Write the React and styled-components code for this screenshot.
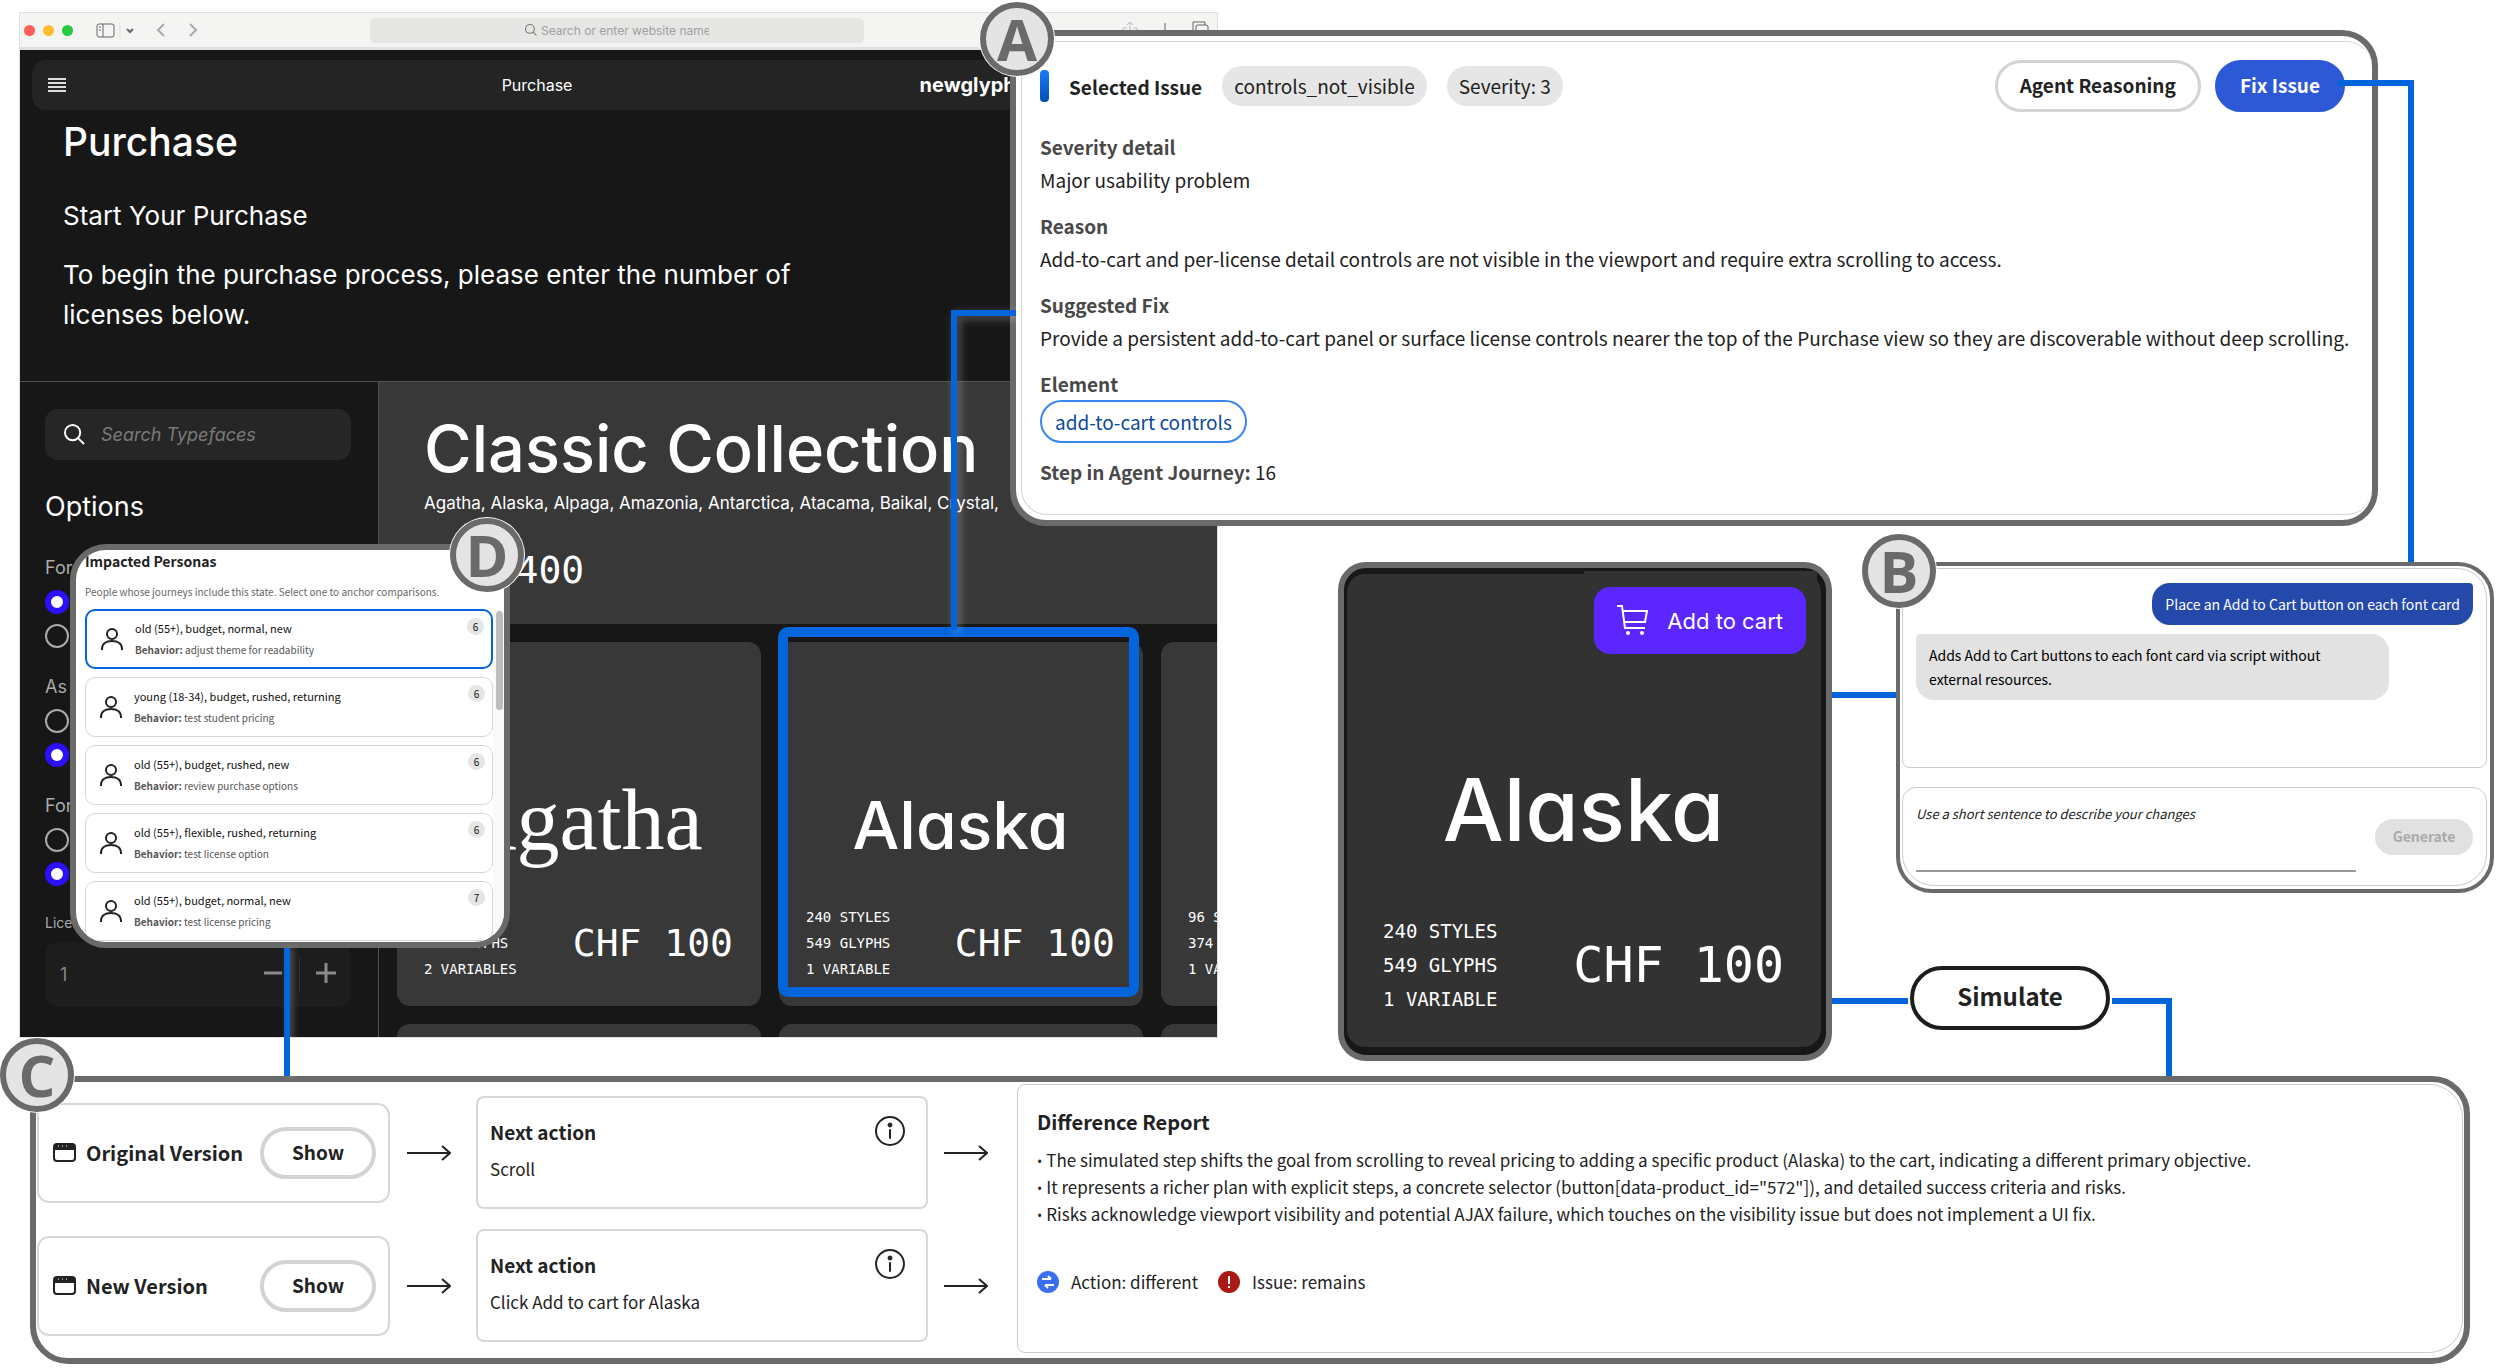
import styled, { createGlobalStyle, css } from "styled-components";

const blue = "#0265dc";
const frame = "#6a6a6a";
const site = `Inter, "Liberation Sans", sans-serif`;
const tool = `"Noto Sans CJK SC", "Noto Sans", sans-serif`;
const mono = `"DejaVu Sans Mono", "Liberation Mono", monospace`;

const GlobalStyle = createGlobalStyle`
  * {
    box-sizing: border-box;
  }

  body {
    margin: 0;
    background: #fff;
  }

  h1, h2, h3, p, ul, fieldset {
    margin: 0;
    padding: 0;
    border: 0;
    font-weight: 400;
  }

  button, input, textarea {
    font-family: inherit;
    margin: 0;
  }
`;

const Canvas = styled.main`
  position: relative;
  padding: 12px 0 8px;
  font-family: ${tool};
  color: #222;
`;

const TopRow = styled.div`
  display: grid;
  grid-template-columns: 1199fr 1294fr;
  align-items: start;
  padding-left: 19px;
`;

/* markers and connectors */

const Marker = styled.span`
  position: absolute;
  z-index: 3;
  left: ${({ $left }) => $left}px;
  top: ${({ $top }) => $top}px;
  width: 74px;
  height: 74px;
  display: flex;
  align-items: center;
  justify-content: center;
  border: 6px solid ${frame};
  border-radius: 50%;
  background: #e4e4e4;
  box-shadow: 0 0 0 1px #fff;
  color: ${frame};
  font-family: "Open Sans", "Noto Sans", sans-serif;
  font-weight: 700;
  font-size: 58px;
  line-height: 62px;
`;

const Link = styled.div`
  flex: none;
  width: ${({ $width }) => $width}px;
  height: 6px;
  margin-top: ${({ $drop }) => $drop}px;
  background: ${blue};
`;

const SelectionElbow = styled.div`
  position: absolute;
  right: 100%;
  top: 274px;
  width: 65px;
  height: 320px;
  border: solid ${blue};
  border-width: 6px 0 0 6px;
  filter: drop-shadow(3px 3px 4px rgba(255, 255, 255, 0.3));
`;

const FixElbow = styled.div`
  position: absolute;
  left: calc(100% - 34px);
  top: 44px;
  width: 76px;
  height: 482px;
  border: solid ${blue};
  border-width: 6px 6px 0 0;
`;

const SimulateElbow = styled.div`
  width: 60px;
  height: 78px;
  margin-top: 32px;
  border: solid ${blue};
  border-width: 6px 6px 0 0;
`;

const PersonaLink = styled.div`
  position: absolute;
  left: 208px;
  top: 398px;
  width: 6px;
  height: 128px;
  background: ${blue};
  box-shadow: 3px 0 6px rgba(255, 255, 255, 0.25);
`;

/* browser window */

const BrowserArea = styled.div`
  position: relative;
  min-width: 0;
`;

const Browser = styled.section`
  height: 1026px;
  display: flex;
  flex-direction: column;
  overflow: hidden;
  border: 1px solid #e0e0e0;
  background: #171717;
  color: #fff;
  font-family: ${site};
`;

const BrowserBar = styled.header`
  flex: none;
  height: 37px;
  display: grid;
  grid-template-columns: 350fr 493fr 353fr;
  align-items: center;
  border-bottom: 3px solid #e0e0e0;
  background: #f4f4f2;
  color: #777;
`;

const BarGroup = styled.div`
  display: flex;
  align-items: center;
  gap: 8px;
  padding-left: 4px;
`;

const BarActions = styled(BarGroup)`
  justify-content: flex-end;
  gap: 19px;
  padding-right: 8px;
`;

const Light = styled.span`
  width: 11px;
  height: 11px;
  border-radius: 50%;
  background: ${({ $color }) => $color};
`;

const Address = styled.label`
  height: 25px;
  display: flex;
  align-items: center;
  justify-content: center;
  gap: 4px;
  border-radius: 5px;
  background: #e6e6e5;

  input {
    width: 168px;
    padding: 0;
    border: 0;
    background: none;
    font-size: 12px;
  }

  input::placeholder {
    color: #a0a0a0;
  }
`;

const SiteNav = styled.nav`
  flex: none;
  height: 50px;
  display: grid;
  grid-template-columns: 458fr 422fr 272fr;
  align-items: center;
  margin: 10px 12px 0;
  padding: 0 16px;
  border-radius: 14px;
  background: #242424;
  font-size: 16px;
`;

const MenuButton = styled.button`
  width: 18px;
  height: 15px;
  padding: 0;
  border: 0;
  background: repeating-linear-gradient(#ddd 0 2px, transparent 2px 4px);
`;

const Brand = styled.a`
  color: #fff;
  font-weight: 700;
  font-size: 20px;
  text-decoration: none;
`;

const Hero = styled.div`
  flex: none;
  padding: 8px 43px 46px;
  border-bottom: 1px solid #505050;

  h1 {
    font-size: 39px;
    font-weight: 500;
    line-height: 48px;
  }

  h2 {
    margin-top: 34px;
    font-size: 26px;
    line-height: 32px;
  }

  p {
    max-width: 760px;
    margin-top: 23px;
    font-size: 26px;
    line-height: 40px;
  }
`;

const Shop = styled.div`
  flex: 1;
  min-height: 0;
  display: grid;
  grid-template-columns: 359px 1fr;
`;

const Sidebar = styled.aside`
  padding: 27px 27px 0 25px;
  border-right: 1px solid #505050;
`;

const SearchBox = styled.label`
  height: 51px;
  display: flex;
  align-items: center;
  gap: 16px;
  padding-left: 19px;
  border-radius: 13px;
  background: #262626;

  input {
    width: 200px;
    padding: 0;
    border: 0;
    background: none;
    font-size: 18px;
    font-style: italic;
  }

  input::placeholder {
    color: #7a7a7a;
  }
`;

const OptionsTitle = styled.h2`
  margin-top: 31px;
  margin-bottom: 33px;
  font-size: 27px;
  line-height: 32px;
`;

const OptionGroup = styled.fieldset`
  display: flex;
  flex-direction: column;
  gap: 10px;
  margin-bottom: 27px;

  legend {
    height: 34px;
    padding: 0;
    color: #aaa;
    font-size: 18px;
    line-height: 24px;
  }
`;

const Radio = styled.input`
  appearance: none;
  width: 24px;
  height: 24px;
  border: 2px solid #aaa;
  border-radius: 50%;

  &:checked {
    border: 6px solid #2b0fff;
    background: #fff;
  }
`;

const LicenseLabel = styled.label`
  display: block;
  color: #aaa;
  font-size: 14px;
  line-height: 20px;
`;

const Stepper = styled.div`
  height: 65px;
  display: flex;
  align-items: center;
  margin-top: 9px;
  padding-left: 15px;
  border-radius: 13px;
  background: #1d1d1d;

  input {
    flex: 1;
    min-width: 0;
    padding: 0;
    border: 0;
    background: none;
    color: #888;
    font-size: 18px;
  }

  button {
    width: 52px;
    height: 34px;
    padding: 0;
    border: 0;
    background: none;
    color: #8a8a8a;
  }

  button + button {
    border-left: 1px solid #333;
  }
`;

const Catalog = styled.div`
  min-width: 0;
  overflow: hidden;
`;

const CollectionHead = styled.header`
  padding: 31px 45px 32px;
  background: #383838;
  white-space: nowrap;

  h2 {
    font-size: 65px;
    font-weight: 500;
    line-height: 72px;
  }

  p {
    margin-top: 6px;
    font-size: 17px;
    line-height: 24px;
  }
`;

const CollectionPrice = styled.strong`
  display: block;
  margin-top: 33px;
  font-family: ${mono};
  font-weight: 400;
  font-size: 38px;
  line-height: 44px;
`;

const CardGrid = styled.div`
  display: grid;
  grid-template-columns: repeat(3, 364px);
  gap: 18px;
  padding: 18px;
`;

const FontCard = styled.article`
  position: relative;
  height: 364px;
  display: flex;
  flex-direction: column;
  justify-content: flex-end;
  padding: 0 28px 24px 27px;
  border-radius: 13px;
  background: #383838;

  ${({ $selected }) =>
    $selected &&
    css`
      &::after {
        content: "";
        position: absolute;
        inset: -15px 4px 9px -1px;
        border: 10px solid ${blue};
        border-radius: 10px;
      }
    `}
`;

const Specimen = styled.h3`
  margin-bottom: 39px;
  text-align: center;
  font-family: ${({ $serif }) => ($serif ? `"Liberation Serif", serif` : site)};
  font-feature-settings: "cv11";
  font-weight: ${({ $serif }) => ($serif ? 400 : 500)};
  font-size: ${({ $serif }) => ($serif ? 86 : 66)}px;
  line-height: ${({ $serif }) => ($serif ? 90 : 80)}px;
`;

const CardFoot = styled.div`
  display: flex;
  align-items: center;
  justify-content: space-between;
  font-family: ${mono};
`;

const Stats = styled.ul`
  list-style: none;
  font-size: 14px;
  line-height: 26px;
`;

const Price = styled.span`
  font-size: 38px;
  line-height: 44px;
`;

/* previewed card, chat and simulation */

const Workbench = styled.div`
  display: grid;
  grid-template-columns: 494fr 662fr;
  align-items: start;
  padding: 550px 18px 0 120px;
`;

const Preview = styled.article`
  padding: 6px 5px 8px 3px;
  border: 6px solid ${frame};
  border-radius: 28px;
  background: #171717;
  color: #fff;
  font-family: ${site};
`;

const PreviewBody = styled.div`
  position: relative;
  display: flex;
  flex-direction: column;
  padding: 13px 37px 31px 36px;
  border-radius: 18px;
  background: #323232;

  /* injected toolbar area that sits above the card edge */
  &::before {
    content: "";
    position: absolute;
    top: -3px;
    right: 4px;
    width: 233px;
    height: 24px;
    background: #323232;
  }
`;

const CartButton = styled.button`
  position: relative;
  align-self: flex-end;
  height: 67px;
  display: flex;
  align-items: center;
  gap: 19px;
  margin-right: -22px;
  padding: 0 23px;
  border: 0;
  border-radius: 16px;
  background: #5b26ff;
  color: #fff;
  font-size: 22px;
`;

const PreviewName = styled(Specimen)`
  margin: 104px 0 52px;
  font-size: 86px;
  line-height: 104px;
`;

const PreviewStats = styled(Stats)`
  font-size: 19px;
  line-height: 34px;
`;

const PreviewPrice = styled(Price)`
  font-size: 50px;
  line-height: 58px;
`;

const Side = styled.div`
  display: flex;
  flex-direction: column;
  gap: 73px;
`;

const SideRow = styled.div`
  display: flex;
  align-items: flex-start;
  gap: ${({ $gap }) => $gap || 0}px;
`;

const Chat = styled.section`
  position: relative;
  flex: 1;
  padding: 2px 3px 3px 2px;
  border: 4px solid ${frame};
  border-radius: 36px;
  background: #fff;
  font-size: 14px;
`;

const Messages = styled.div`
  height: 200px;
  display: flex;
  flex-direction: column;
  align-items: flex-start;
  gap: 9px;
  padding: 14px 13px;
  border: 1px solid #ccc;
  border-radius: 30px 30px 8px 8px;
  line-height: 24px;
`;

const Bubble = styled.p`
  max-width: 473px;
  padding: 9px 40px 9px 13px;
  border-radius: 4px 18px 18px 18px;
  background: #e2e2e2;
  color: #000;

  ${({ $own }) =>
    $own &&
    css`
      align-self: flex-end;
      padding: 9px 13px;
      border-radius: 18px 4px 18px 18px;
      background: #2549ab;
      color: #fff;
    `}
`;

const Composer = styled.form`
  display: flex;
  align-items: center;
  gap: 19px;
  margin-top: 19px;
  padding: 13px;
  border: 1px solid #ccc;
  border-radius: 14px 14px 32px 32px;

  textarea {
    flex: 1;
    height: 71px;
    padding: 0;
    border: 0;
    border-bottom: 2px solid #999;
    background: none;
    font-size: 13px;
    font-style: italic;
    line-height: 26px;
    resize: none;
  }

  textarea::placeholder {
    color: #222;
  }

  button {
    width: 98px;
    height: 36px;
    padding: 0 0 2px;
    border: 0;
    border-radius: 18px;
    background: #e1e1e1;
    color: #aaa;
    font-weight: 700;
    font-size: 14px;
  }
`;

const SimulateButton = styled.button`
  width: 200px;
  height: 64px;
  padding: 0 0 6px;
  border: 4px solid #1d1d1d;
  border-radius: 32px;
  background: #fff;
  color: #222;
  font-weight: 700;
  font-size: 24px;
`;

/* selected issue */

const IssuePanel = styled.section`
  position: absolute;
  z-index: 2;
  left: 1010px;
  right: 134px;
  top: 30px;
  padding: 5px 0 5px 5px;
  border: 6px solid ${frame};
  border-radius: 36px;
  background: #fff;
  font-size: 19px;
  line-height: 33px;
`;

const IssueBody = styled.div`
  padding: 18px 0 26px 18px;
  border: 1px solid #d5d5d5;
  border-right: 0;
  border-radius: 26px;
`;

const IssueHead = styled.header`
  display: flex;
  align-items: center;
  gap: 20px;
  margin-bottom: 18px;
  padding-right: 27px;

  h2 {
    font-size: 19px;
    font-weight: 700;
  }
`;

const Accent = styled.span`
  width: 9px;
  height: 32px;
  border-radius: 4px;
  background: linear-gradient(#1a7af8, #0250b8);
`;

const Chip = styled.span`
  padding: 3px 12px 4px;
  border-radius: 20px;
  background: #e6e6e6;
`;

const HeadActions = styled.div`
  display: flex;
  gap: 14px;
  margin-left: auto;
`;

const PillButton = styled.button`
  height: 52px;
  padding: 0 22px 3px;
  border: 3px solid #d3d3d3;
  border-radius: 26px;
  background: #fff;
  color: #222;
  font-weight: 700;
  font-size: 19px;

  ${({ $primary }) =>
    $primary &&
    css`
      border-color: #2d58d6;
      background: #2d58d6;
      color: #fff;
    `}
`;

const Detail = styled.div`
  margin-bottom: ${({ $last }) => ($last ? 12 : 13)}px;
  white-space: nowrap;

  h3 {
    color: #484848;
    font-size: 19px;
    font-weight: 700;
  }
`;

const ElementButton = styled.button`
  height: 43px;
  display: block;
  padding: 0 13px 1px;
  border: 2px solid #3b87f2;
  border-radius: 22px;
  background: #fff;
  color: #0b4a9e;
  font-size: 19px;
`;

const StepLine = styled.p`
  strong {
    color: #484848;
  }
`;

/* personas */

const PersonaPanel = styled.section`
  position: absolute;
  z-index: 1;
  left: 51px;
  top: 532px;
  width: 440px;
  height: 404px;
  border: 6px solid ${frame};
  border-radius: 36px;
  background: #fff;
`;

const PersonaClip = styled.div`
  height: 100%;
  padding: 1px 0 0 9px;
  overflow: hidden;
  border-radius: 30px;

  h2 {
    font-size: 14px;
    font-weight: 700;
    line-height: 20px;
  }

  > p {
    margin: 13px 0 9px;
    color: #666;
    font-size: 10px;
    line-height: 16px;
  }
`;

const PersonaScroll = styled.div`
  display: flex;
`;

const PersonaList = styled.div`
  flex: 1;
  display: flex;
  flex-direction: column;
  gap: 8px;
`;

const Persona = styled.button`
  position: relative;
  height: 60px;
  display: flex;
  align-items: center;
  gap: 12px;
  padding: 0 14px;
  border: ${({ $active }) => ($active ? `2px solid ${blue}` : "1px solid #d5d5d5")};
  border-radius: 10px;
  background: #fff;
  color: #111;
  text-align: left;
  font-size: 11px;
  line-height: 21px;
`;

const Behavior = styled.span`
  display: block;
  color: #555;
  font-size: 10px;
`;

const Count = styled.span`
  position: absolute;
  top: 7px;
  right: 7px;
  width: 17px;
  height: 17px;
  border-radius: 50%;
  background: #e5e5e5;
  text-align: center;
  font-size: 10px;
  line-height: 17px;
`;

const Scrollbar = styled.div`
  width: 11px;
  padding: 2px 0 0 3px;
  background: #fafafa;

  &::before {
    content: "";
    display: block;
    width: 7px;
    height: 99px;
    border-radius: 4px;
    background: #bdbdbd;
  }
`;

/* version comparison */

const ComparePanel = styled.section`
  position: relative;
  display: flex;
  height: 288px;
  margin: 0 42px 0 30px;
  padding: 2px 1px 5px;
  border: 6px solid ${frame};
  border-radius: 38px;
  background: #fff;
  font-size: 17px;
`;

const Versions = styled.div`
  flex: none;
  display: flex;
  flex-direction: column;
  gap: 20px;
  padding-top: 12px;
`;

const VersionRow = styled.div`
  display: flex;
  align-items: center;
`;

const VersionBox = styled.div`
  width: 353px;
  height: 100px;
  display: flex;
  align-items: center;
  gap: 10px;
  padding: 0 12px 0 14px;
  border: 2px solid #d8d8d8;
  border-radius: 12px;

  h3 {
    flex: 1;
    font-size: 20px;
    font-weight: 700;
  }
`;

const ShowButton = styled(PillButton)`
  width: 116px;
  border-width: 4px;
`;

const Arrow = styled.svg`
  width: 44px;
  height: 18px;
  margin: 0 25px 0 17px;
  stroke: #222;
  stroke-width: 2;
  fill: none;

  &:last-child {
    margin: 0 29px 0 16px;
  }
`;

const ActionBox = styled.div`
  width: 452px;
  height: 113px;
  display: flex;
  align-items: flex-start;
  justify-content: space-between;
  padding: 18px 21px 0 12px;
  border: 2px solid #d8d8d8;
  border-radius: 8px;

  h3 {
    font-size: 19px;
    font-weight: 700;
    line-height: 32px;
  }

  p {
    margin-top: 4px;
    line-height: 34px;
  }
`;

const Report = styled.section`
  flex: 1;
  padding: 21px 19px;
  border: 1px solid #ccc;
  border-radius: 8px 34px 34px 8px;
  white-space: nowrap;

  h2 {
    margin-bottom: 8px;
    font-size: 20px;
    font-weight: 700;
    line-height: 32px;
  }

  li {
    list-style: none;
    line-height: 27px;
  }

  li::before {
    content: "•";
    margin-right: 4px;
    font-family: "Open Sans", sans-serif;
    font-size: 14px;
    line-height: 14px;
  }
`;

const Outcome = styled.div`
  display: flex;
  align-items: center;
  gap: 12px;
  margin-top: 41px;
  line-height: 28px;

  span {
    margin-right: 8px;
  }
`;

function Lens({ size, width }) {
  return (
    <svg
      width={size}
      height={size}
      viewBox="0 0 22 22"
      fill="none"
      stroke="currentColor"
      strokeWidth={width}
    >
      <circle cx="9" cy="9" r="8" />
      <path d="M15 15l6 6" />
    </svg>
  );
}

function PersonIcon() {
  return (
    <svg width="22" height="24" viewBox="0 0 22 24" fill="none" stroke="#222" strokeWidth="2">
      <circle cx="11" cy="7" r="5" />
      <path d="M1 23v-1c0-5 4-8 10-8s10 3 10 8v1" />
    </svg>
  );
}

function CartIcon() {
  return (
    <svg width="31" height="31" viewBox="0 0 31 31" fill="none" stroke="#fff" strokeWidth="2">
      <path d="M0 1h5l3 22h20M5 6h25l-2 11H7" />
      <circle cx="11" cy="28" r="2" fill="#fff" stroke="none" />
      <circle cx="25" cy="28" r="2" fill="#fff" stroke="none" />
    </svg>
  );
}

function WindowIcon() {
  return (
    <svg width="23" height="19" viewBox="0 0 23 19" fill="none" stroke="#222" strokeWidth="2">
      <rect x="1" y="1" width="21" height="17" rx="3" />
      <path d="M1 6h21" />
      <path d="M2 3h19" strokeWidth="4" />
      <path d="M5 3h1M9 3h1M13 3h1" stroke="#fff" strokeWidth="1" />
    </svg>
  );
}

function InfoIcon() {
  return (
    <svg width="30" height="30" viewBox="0 0 30 30" fill="none" stroke="#222" strokeWidth="2">
      <circle cx="15" cy="15" r="14" />
      <path d="M15 14v8" strokeLinecap="round" />
      <circle cx="15" cy="9" r="2" fill="#222" strokeWidth="1" />
    </svg>
  );
}

function LongArrow() {
  return (
    <Arrow viewBox="0 0 44 18">
      <path d="M0 9h42M35 2l8 7-8 7" />
    </Arrow>
  );
}

const optionGroups = [
  { title: "For", checked: 0 },
  { title: "As", checked: 1 },
  { title: "For", checked: 1 },
];

const fonts = [
  { name: "Agatha", serif: true, stats: ["160 STYLES", "430 GLYPHS", "2 VARIABLES"] },
  { name: "Alaska", selected: true, stats: ["240 STYLES", "549 GLYPHS", "1 VARIABLE"] },
  { name: "", stats: ["96 STYLES", "374 GLYPHS", "1 VARIABLE"] },
];

const personas = [
  { title: "old (55+), budget, normal, new", behavior: "adjust theme for readability", count: 6 },
  { title: "young (18-34), budget, rushed, returning", behavior: "test student pricing", count: 6 },
  { title: "old (55+), budget, rushed, new", behavior: "review purchase options", count: 6 },
  { title: "old (55+), flexible, rushed, returning", behavior: "test license option", count: 6 },
  { title: "old (55+), budget, normal, new", behavior: "test license pricing", count: 7 },
];

const details = [
  { title: "Severity detail", text: "Major usability problem" },
  {
    title: "Reason",
    text: "Add-to-cart and per-license detail controls are not visible in the viewport and require extra scrolling to access.",
  },
  {
    title: "Suggested Fix",
    text: "Provide a persistent add-to-cart panel or surface license controls nearer the top of the Purchase view so they are discoverable without deep scrolling.",
  },
];

const versions = [
  { title: "Original Version", action: "Scroll" },
  { title: "New Version", action: "Click Add to cart for Alaska" },
];

const findings = [
  "The simulated step shifts the goal from scrolling to reveal pricing to adding a specific product (Alaska) to the cart, indicating a different primary objective.",
  `It represents a richer plan with explicit steps, a concrete selector (button[data-product_id="572"]), and detailed success criteria and risks.`,
  "Risks acknowledge viewport visibility and potential AJAX failure, which touches on the visibility issue but does not implement a UI fix.",
];

function BrowserWindow() {
  return (
    <Browser>
      <BrowserBar>
        <BarGroup>
          <Light $color="#ff5f57" />
          <Light $color="#febc2e" />
          <Light $color="#28c840" />
          <svg width="100" height="16" viewBox="0 0 100 16" fill="none" stroke="#666">
            <rect x="16" y="2" width="17" height="13" rx="2" />
            <path d="M22 2v13M18 5h2M18 8h2" />
            <path d="M39 0v16" stroke="#ddd" />
            <path d="M46 7l3 3 3-3" strokeWidth="2" />
            <path d="M83 2l-6 6 6 6" stroke="#aaa" strokeWidth="2" />
          </svg>
          <svg width="10" height="16" viewBox="0 0 10 16" fill="none" stroke="#aaa" strokeWidth="2">
            <path d="M1 2l6 6-6 6" />
          </svg>
        </BarGroup>
        <Address>
          <Lens size={12} width={2} />
          <input aria-label="Address" placeholder="Search or enter website name" />
        </Address>
        <BarActions>
          <svg width="16" height="20" viewBox="0 0 16 20" fill="none" stroke="#bbb">
            <path d="M5 8H1v10h14V8h-4M8 13V2M5 5l3-3 3 3" />
          </svg>
          <svg width="16" height="16" viewBox="0 0 16 16" stroke="#666">
            <path d="M8 1v14M1 10h14" />
          </svg>
          <svg width="17" height="18" viewBox="0 0 17 18" fill="none" stroke="#666">
            <path d="M4 13H1V1h12v3" />
            <rect x="4" y="4" width="12" height="12" rx="2" />
          </svg>
        </BarActions>
      </BrowserBar>
      <SiteNav>
        <MenuButton aria-label="Menu" />
        <span>Purchase</span>
        <Brand href="#">newglyph</Brand>
      </SiteNav>
      <Hero>
        <h1>Purchase</h1>
        <h2>Start Your Purchase</h2>
        <p>To begin the purchase process, please enter the number of licenses below.</p>
      </Hero>
      <Shop>
        <Sidebar>
          <SearchBox>
            <Lens size={21} width={2} />
            <input aria-label="Typefaces" placeholder="Search Typefaces" />
          </SearchBox>
          <OptionsTitle>Options</OptionsTitle>
          {optionGroups.map(({ title, checked }, index) => (
            <OptionGroup key={index}>
              <legend>{title}</legend>
              {[0, 1].map((option) => (
                <Radio
                  key={option}
                  type="radio"
                  name={`option-${index}`}
                  aria-label={`${title} ${option + 1}`}
                  defaultChecked={option === checked}
                />
              ))}
            </OptionGroup>
          ))}
          <LicenseLabel htmlFor="licenses">Licenses</LicenseLabel>
          <Stepper>
            <input id="licenses" defaultValue="1" />
            <button aria-label="Fewer licenses">
              <svg width="20" height="20" stroke="currentColor" strokeWidth="3">
                <path d="M1 10h18" />
              </svg>
            </button>
            <button aria-label="More licenses">
              <svg width="20" height="20" stroke="currentColor" strokeWidth="3">
                <path d="M0 10h20M10 0v20" />
              </svg>
            </button>
          </Stepper>
        </Sidebar>
        <Catalog>
          <CollectionHead>
            <h2>Classic Collection</h2>
            <p>Agatha, Alaska, Alpaga, Amazonia, Antarctica, Atacama, Baikal, Crystal,</p>
            <CollectionPrice>CHF 400</CollectionPrice>
          </CollectionHead>
          <CardGrid>
            {fonts.map(({ name, serif, selected, stats }, index) => (
              <FontCard key={index} $selected={selected}>
                <Specimen $serif={serif}>{name}</Specimen>
                <CardFoot>
                  <Stats>
                    {stats.map((stat) => (
                      <li key={stat}>{stat}</li>
                    ))}
                  </Stats>
                  <Price>CHF 100</Price>
                </CardFoot>
              </FontCard>
            ))}
            <FontCard />
            <FontCard />
            <FontCard />
          </CardGrid>
        </Catalog>
      </Shop>
    </Browser>
  );
}

function Personas() {
  return (
    <PersonaPanel>
      <PersonaClip>
        <h2>Impacted Personas</h2>
        <p>People whose journeys include this state. Select one to anchor comparisons.</p>
        <PersonaScroll>
          <PersonaList>
            {personas.map(({ title, behavior, count }, index) => (
              <Persona key={index} $active={index === 0}>
                <PersonIcon />
                <span>
                  {title}
                  <Behavior>
                    <strong>Behavior:</strong> {behavior}
                  </Behavior>
                </span>
                <Count>{count}</Count>
              </Persona>
            ))}
          </PersonaList>
          <Scrollbar />
        </PersonaScroll>
      </PersonaClip>
      <PersonaLink />
      <Marker $left={374} $top={-32}>
        D
      </Marker>
    </PersonaPanel>
  );
}

function SelectedIssue() {
  return (
    <IssuePanel>
      <IssueBody>
        <IssueHead>
          <Accent />
          <h2>Selected Issue</h2>
          <Chip>controls_not_visible</Chip>
          <Chip>Severity: 3</Chip>
          <HeadActions>
            <PillButton>Agent Reasoning</PillButton>
            <PillButton $primary>Fix Issue</PillButton>
          </HeadActions>
        </IssueHead>
        {details.map(({ title, text }) => (
          <Detail key={title}>
            <h3>{title}</h3>
            <p>{text}</p>
          </Detail>
        ))}
        <Detail $last>
          <h3>Element</h3>
          <ElementButton>add-to-cart controls</ElementButton>
        </Detail>
        <StepLine>
          <strong>Step in Agent Journey:</strong> 16
        </StepLine>
      </IssueBody>
      <SelectionElbow />
      <FixElbow />
      <Marker $left={-36} $top={-34}>
        A
      </Marker>
    </IssuePanel>
  );
}

export default function App() {
  return (
    <Canvas>
      <GlobalStyle />
      <TopRow>
        <BrowserArea>
          <BrowserWindow />
          <Personas />
        </BrowserArea>
        <Workbench>
          <Preview>
            <PreviewBody>
              <CartButton>
                <CartIcon />
                Add to cart
              </CartButton>
              <PreviewName>Alaska</PreviewName>
              <CardFoot>
                <PreviewStats>
                  <li>240 STYLES</li>
                  <li>549 GLYPHS</li>
                  <li>1 VARIABLE</li>
                </PreviewStats>
                <PreviewPrice>CHF 100</PreviewPrice>
              </CardFoot>
            </PreviewBody>
          </Preview>
          <Side>
            <SideRow>
              <Link $width={64} $drop={130} />
              <Chat>
                <Messages>
                  <Bubble $own>Place an Add to Cart button on each font card</Bubble>
                  <Bubble>
                    Adds Add to Cart buttons to each font card via script without external
                    resources.
                  </Bubble>
                </Messages>
                <Composer>
                  <textarea
                    aria-label="Changes"
                    placeholder="Use a short sentence to describe your changes"
                  />
                  <button type="button">Generate</button>
                </Composer>
                <Marker $left={-38} $top={-32}>
                  B
                </Marker>
              </Chat>
            </SideRow>
            <SideRow $gap={2}>
              <Link $width={76} $drop={32} />
              <SimulateButton>Simulate</SimulateButton>
              <SimulateElbow />
            </SideRow>
          </Side>
        </Workbench>
      </TopRow>
      <SelectedIssue />
      <ComparePanel>
        <Versions>
          {versions.map(({ title, action }) => (
            <VersionRow key={title}>
              <VersionBox>
                <WindowIcon />
                <h3>{title}</h3>
                <ShowButton>Show</ShowButton>
              </VersionBox>
              <LongArrow />
              <ActionBox>
                <div>
                  <h3>Next action</h3>
                  <p>{action}</p>
                </div>
                <InfoIcon />
              </ActionBox>
              <LongArrow />
            </VersionRow>
          ))}
        </Versions>
        <Report>
          <h2>Difference Report</h2>
          <ul>
            {findings.map((finding) => (
              <li key={finding}>{finding}</li>
            ))}
          </ul>
          <Outcome>
            <svg width="22" height="22" viewBox="0 0 22 22" fill="none" stroke="#fff" strokeWidth="2">
              <circle cx="11" cy="11" r="11" fill="#3b6ef0" stroke="none" />
              <path d="M5 8h9M11 5l3 3M17 14H8M11 17l-3-3" />
            </svg>
            <span>Action: different</span>
            <svg width="22" height="22" viewBox="0 0 22 22" stroke="#fff" strokeWidth="2">
              <circle cx="11" cy="11" r="11" fill="#a81a14" stroke="none" />
              <path d="M11 5v8M11 15v2" />
            </svg>
            <span>Issue: remains</span>
          </Outcome>
        </Report>
        <Marker $left={-36} $top={-44}>
          C
        </Marker>
      </ComparePanel>
    </Canvas>
  );
}
